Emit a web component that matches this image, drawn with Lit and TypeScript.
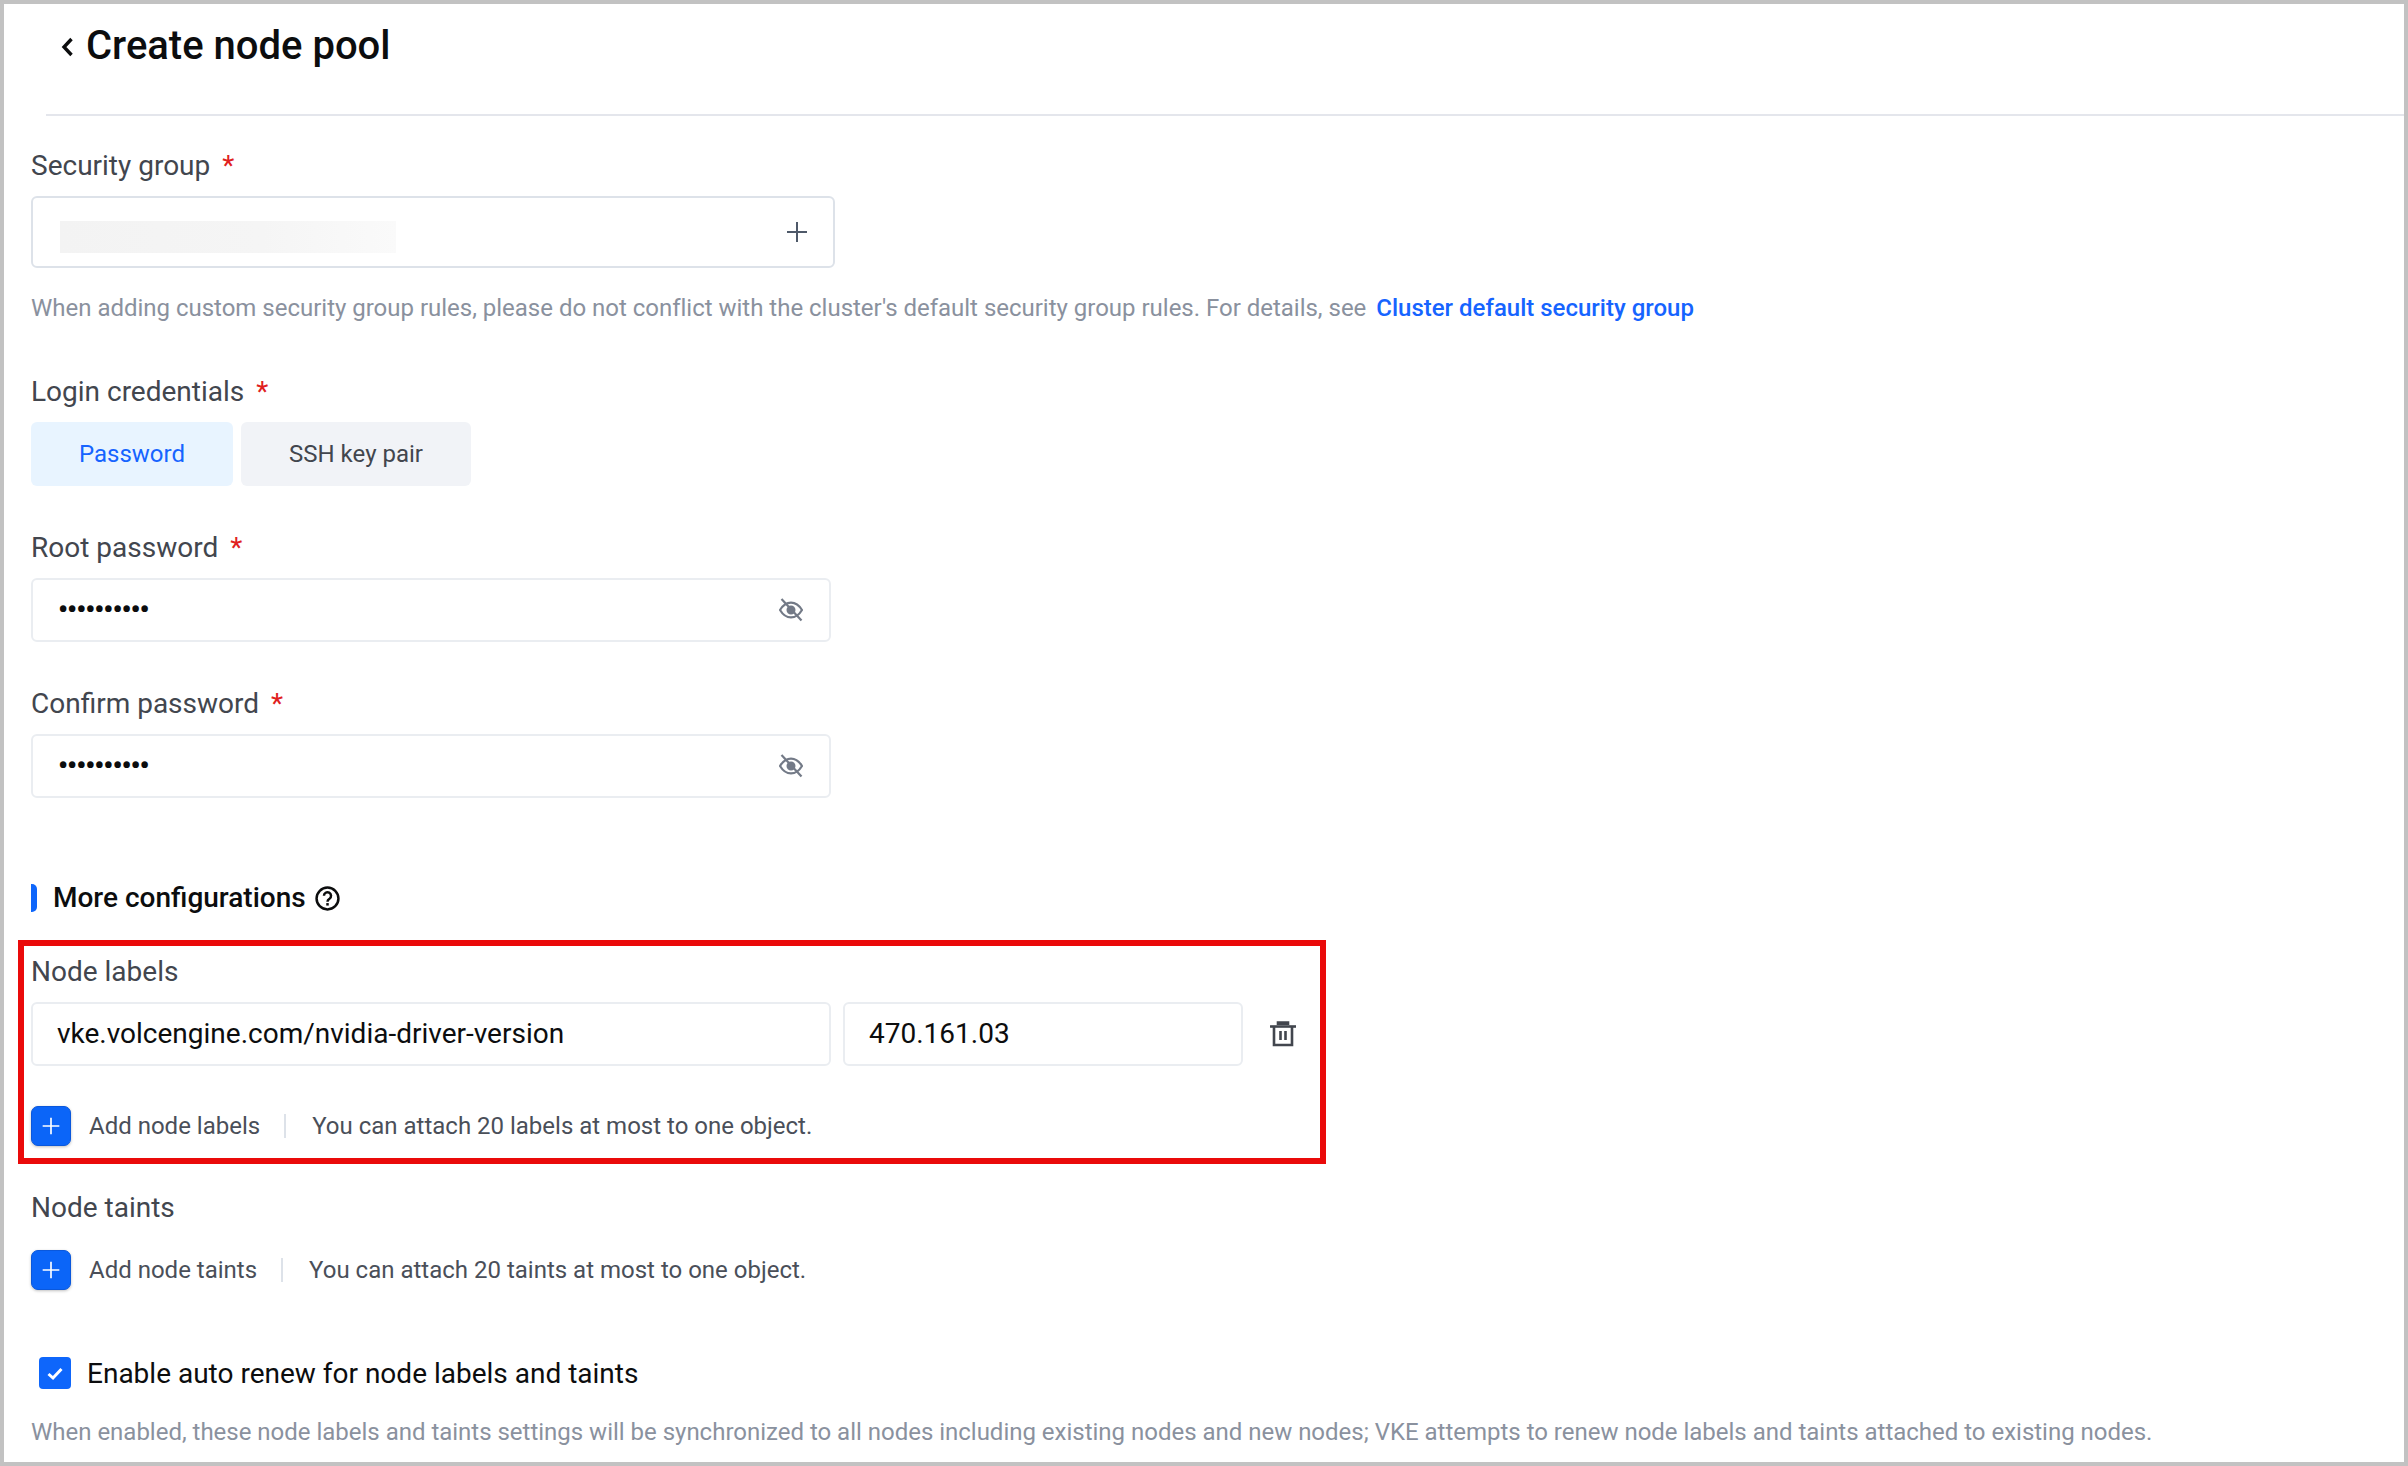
import { LitElement, html, css } from "lit";
import { customElement } from "lit/decorators.js";

const eye = html`<svg class="eye" viewBox="0 0 24 24" fill="none" stroke="#737a87" stroke-width="2.2">
  <path d="M1 12C4 7 7.8 4.6 12 4.6S20 7 23 12C20 17 16.2 19.4 12 19.4S4 17 1 12Z"/>
  <circle cx="12" cy="12" r="3.4" fill="#737a87"/><path d="M2.5 1L22.5 22.5"/></svg>`;
const plus = html`<svg viewBox="0 0 24 24" class="plus-i" fill="none" stroke="#fff" stroke-width="2"><path d="M12 2V22M2 12H22"/></svg>`;

@customElement("app-root")
export class AppRoot extends LitElement {
  static styles = css`
    :host { display: block; width: 2408px; height: 1466px; box-sizing: border-box; border: 4px solid #c2c2c2;
      background: #fff; font-family: Roboto, "Liberation Sans", sans-serif; position: relative; overflow: hidden; color: #42464e; font-size: 28px; }
    .header { height: 110px; display: flex; align-items: flex-start; padding: 19px 0 0 57px; box-sizing: border-box; gap: 13px; }
    .back { width: 12px; height: 20px; margin-top: 14px; flex: none; }
    h1 { margin: 0; font-size: 40px; font-weight: 500; line-height: 46px; color: #0c0d0e; }
    .rule { height: 2px; margin-left: 42px; background: #e4e6ec; }
    .form { padding-left: 27px; }
    .line { height: 40px; line-height: 40px; white-space: nowrap; }
    .req { color: #e02020; margin-left: 12px; }
    .hint { color: #8a919e; font-size: 24px; letter-spacing: -0.012px; }
    .hint a { color: #1664ff; font-weight: 500; margin-left: 4px; text-decoration: none; letter-spacing: 0; }
    .mt-30 { margin-top: 30px; } .mt-20 { margin-top: 20px; } .mt-44 { margin-top: 44px; } .mt-42 { margin-top: 42px; }
    .mt-80 { margin-top: 80px; } .mt-34 { margin-top: 34px; } .mt-19 { margin-top: 19px; }
    .field { box-sizing: border-box; height: 64px; width: 800px; border: 2px solid #eaedf1; border-radius: 6px; display: flex; align-items: center;
      padding: 0 26px 0 25px; margin-top: 10px; justify-content: space-between; color: #0c0d0e; }
    .sg { width: 804px; height: 72px; margin-top: 10px; border-color: #dde2e9; padding: 0 26px 0 27px; }
    .blur { width: 336px; height: 32px; margin-top: 10px; background: linear-gradient(90deg, #f3f3f3, #f5f5f5 60%, #fafafa); }
    .sg-plus { width: 20px; height: 20px; }
    .dots { font-size: 28px; margin-top: -2px; font-weight: 700; letter-spacing: -1px; }
    .eye { width: 24px; height: 24px; }
    .tabs { display: flex; gap: 8px; margin-top: 10px; }
    .tab { height: 64px; line-height: 64px; text-align: center; border-radius: 6px; font-size: 24px; }
    .tab.on { width: 202px; background: #e8f4ff; color: #1664ff; }
    .tab.off { width: 230px; background: #f1f3f7; color: #42464e; }
    .section { display: flex; align-items: center; }
    .bar { width: 6px; height: 28px; background: #0e66fb; border-radius: 0 5px 5px 0; margin-right: 16px; }
    .section b { font-weight: 500; font-size: 28px; color: #0c0d0e; }
    .q { width: 25px; height: 25px; margin-left: 9px; }
    .pair { display: flex; align-items: center; margin-top: 10px; }
    .pair .field { margin-top: 0; padding: 0 24px 2px; }
    .pair .v { width: 400px; margin-left: 12px; }
    .trash { width: 26px; height: 26px; margin-left: 27px; }
    .add { display: flex; align-items: center; height: 40px; font-size: 24px; color: #4a4f59; white-space: nowrap; }
    .mt-40 { margin-top: 40px; } .mt-22 { margin-top: 22px; } .mt-63 { margin-top: 63px; }
    .pbtn { box-sizing: border-box; width: 40px; height: 40px; border-radius: 7px; background: #0b65f8; border: 1px solid #0a58dc; display: flex; align-items: center; justify-content: center; box-shadow: 0 1px 3px rgba(0,0,0,.25); margin-right: 18px; }
    .plus-i { width: 20px; height: 20px; }
    .sep { width: 2px; height: 24px; background: #dde2e9; margin: 0 26px 0 24px; }
    .check { display: flex; align-items: center; padding-left: 8px; color: #0c0d0e; }
    .box { width: 32px; height: 32px; border-radius: 4px; background: #0e66fb; margin-right: 16px; display: flex; align-items: center; justify-content: center; }
    .box svg { width: 16px; height: 16px; margin-top: 2px; }
    .check-t { padding-top: 2px; line-height: 38px; }
    .mark { position: absolute; left: 14px; top: 936px; width: 1308px; height: 224px; box-sizing: border-box; border: 6px solid #ea0a0a; pointer-events: none; }
  `;
  private label(t: string, cls: string, req = true) {
    return html`<div class="line ${cls}">${t}${req ? html`<span class="req">*</span>` : ""}</div>`;
  }
  render() {
    return html`
      <div class="header">
        <svg class="back" viewBox="0 0 12 20" fill="none" stroke="#0c0d0e" stroke-width="3.4"><path d="M10.5 2L3 10L10.5 18"/></svg>
        <h1>Create node pool</h1>
      </div>
      <div class="rule"></div>
      <div class="form">
        ${this.label("Security group", "mt-30")}
        <div class="field sg"><div class="blur"></div>
          <svg class="sg-plus" viewBox="0 0 20 20" fill="none" stroke="#4e5969" stroke-width="2"><path d="M10 0V20M0 10H20"/></svg></div>
        <div class="line hint mt-20">When adding custom security group rules, please do not conflict with the cluster's default security group rules. For details, see <a>Cluster default security group</a></div>
        ${this.label("Login credentials", "mt-44")}
        <div class="tabs"><div class="tab on">Password</div><div class="tab off">SSH key pair</div></div>
        ${this.label("Root password", "mt-42")}
        <div class="field"><span class="dots">••••••••••</span>${eye}</div>
        ${this.label("Confirm password", "mt-42")}
        <div class="field"><span class="dots">••••••••••</span>${eye}</div>
        <div class="line section mt-80"><span class="bar"></span><b>More configurations</b>
          <svg class="q" viewBox="0 0 24 24" fill="none" stroke="#0c0d0e" stroke-width="2.4"><circle cx="12" cy="12" r="10.5"/><path d="M8.6 9.4A3.4 3.4 0 1 1 13.9 12.2C12.6 13 12 13.6 12 15"/><path d="M12 16.4V18.8"/></svg></div>
        ${this.label("Node labels", "mt-34", false)}
        <div class="pair">
          <div class="field">vke.volcengine.com/nvidia-driver-version</div>
          <div class="field v">470.161.03</div>
          <svg class="trash" viewBox="0 0 26 26" fill="none" stroke="#42464e" stroke-width="2.6"><path d="M0 5.5H26"/><path d="M8 4V1.5H18V4" fill="#42464e"/><path d="M4 5.5V24H22V5.5"/><path d="M10.5 10V19M15.5 10V19"/></svg>
        </div>
        <div class="add mt-40"><span class="pbtn">${plus}</span>Add node labels<span class="sep"></span>You can attach 20 labels at most to one object.</div>
        ${this.label("Node taints", "mt-42", false)}
        <div class="add mt-22"><span class="pbtn">${plus}</span>Add node taints<span class="sep"></span>You can attach 20 taints at most to one object.</div>
        <div class="line check mt-63"><span class="box"><svg viewBox="0 0 16 16" fill="none" stroke="#fff" stroke-width="3"><path d="M1.5 8L6 12L14.5 3"/></svg></span><span class="check-t">Enable auto renew for node labels and taints</span></div>
        <div class="line hint mt-19">When enabled, these node labels and taints settings will be synchronized to all nodes including existing nodes and new nodes; VKE attempts to renew node labels and taints attached to existing nodes.</div>
      </div>
      <div class="mark"></div>
    `;
  }
}
